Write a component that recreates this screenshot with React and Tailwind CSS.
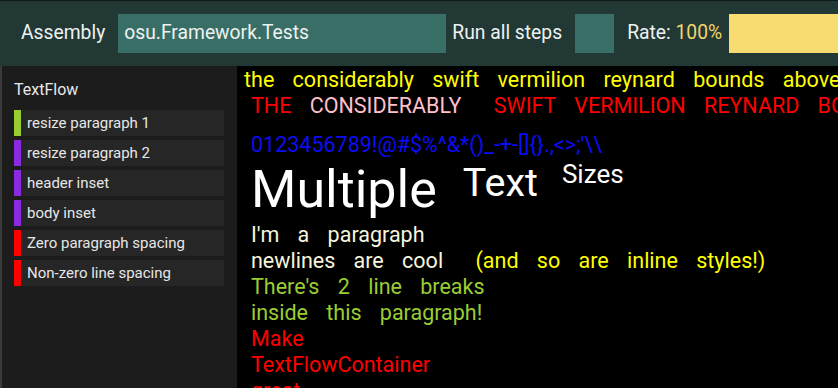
import React from 'react';

const tests = [
  { name: 'resize paragraph 1', color: 'bg-[#9acd32]' },
  { name: 'resize paragraph 2', color: 'bg-[#8a2be2]' },
  { name: 'header inset', color: 'bg-[#8a2be2]' },
  { name: 'body inset', color: 'bg-[#8a2be2]' },
  { name: 'Zero paragraph spacing', color: 'bg-[#ff0000]' },
  { name: 'Non-zero line spacing', color: 'bg-[#ff0000]' },
];

function Header() {
  return (
    <header className="h-[66px] shrink-0 bg-[#213835] border-t border-[#0f1a19] flex items-center text-[19.3px] text-[#eef2f1]">
      <span className="pl-[21px] pr-[13px]">Assembly</span>
      <div className="w-[328px] h-[39px] bg-[#396e66] flex items-center px-[6px]">osu.Framework.Tests</div>
      <span className="pl-[6px] pr-[13px]">Run all steps</span>
      <div className="w-[39px] h-[39px] bg-[#396e66]" />
      <span className="pl-[13px] pr-[7px]">
        Rate: <span className="text-[#f3d56b]">100%</span>
      </span>
      <div className="flex-1 h-[39px] bg-[#f8dc72]" />
    </header>
  );
}

function Sidebar() {
  return (
    <aside className="w-[237px] shrink-0 bg-[#1c1c1c] border-l-2 border-[#3a3a3a] pl-[12px] pr-[13px]">
      <div className="h-[44px] pt-[3px] flex items-center text-[16px] text-[#e8e8e8]">TextFlow</div>
      <div className="flex flex-col gap-[4px]">
        {tests.map((t) => (
          <div key={t.name} className="h-[26px] bg-[#262626] flex items-center">
            <div className={`w-[7px] h-full ${t.color}`} />
            <span className="pl-[6px] text-[15px] text-[#e6e6e6]">{t.name}</span>
          </div>
        ))}
      </div>
    </aside>
  );
}

function Flow() {
  return (
    <main className="flex-1 bg-black overflow-hidden pl-[14px] whitespace-nowrap text-[21.5px]">
      <div className="mt-[1px] h-[26px] leading-[26px] -ml-[7px] text-[#ffff00] [word-spacing:13px]">
        the considerably swift vermilion reynard bounds above the languid hound
      </div>
      <div className="h-[26px] leading-[26px] text-[#ff0000] [word-spacing:13px]">
        THE <span className="text-[#ffc0cb] mr-[14px]">CONSIDERABLY</span> SWIFT VERMILION REYNARD BOUNDS ABOVE THE LANGUID HOUND
      </div>
      <div className="mt-[13px] h-[26px] leading-[26px] text-[#0c0cf5]">0123456789!@#$%^&amp;*()_-+-[]{'{}'}.,&lt;&gt;;'\\</div>
      <div className="mt-[6px] flex items-start leading-none text-white">
        <span className="text-[52px]">Multiple</span>
        <span className="ml-[26px] text-[39.5px] -mt-[1px]">Text</span>
        <span className="ml-[24px] text-[26px] -mt-[3px]">Sizes</span>
      </div>
      <div className="mt-[6px] leading-[26px] [word-spacing:13px]">
        <div className="text-[#f5f5dc]">I'm a paragraph</div>
        <div className="text-[#f5f5dc]">
          newlines are cool <span className="ml-[14px] text-[#ffff00]">(and so are inline styles!)</span>
        </div>
        <div className="text-[#9acd32]">There's 2 line breaks</div>
        <div className="text-[#9acd32]">inside this paragraph!</div>
        <div className="text-[#ff0000]">Make</div>
        <div className="text-[#ff0000]">TextFlowContainer</div>
        <div className="text-[#ff0000]">great</div>
      </div>
    </main>
  );
}

export default function App() {
  return (
    <div className="w-[838px] h-[388px] overflow-hidden flex flex-col font-['Roboto',sans-serif]">
      <Header />
      <div className="flex flex-1 min-h-0">
        <Sidebar />
        <Flow />
      </div>
    </div>
  );
}
